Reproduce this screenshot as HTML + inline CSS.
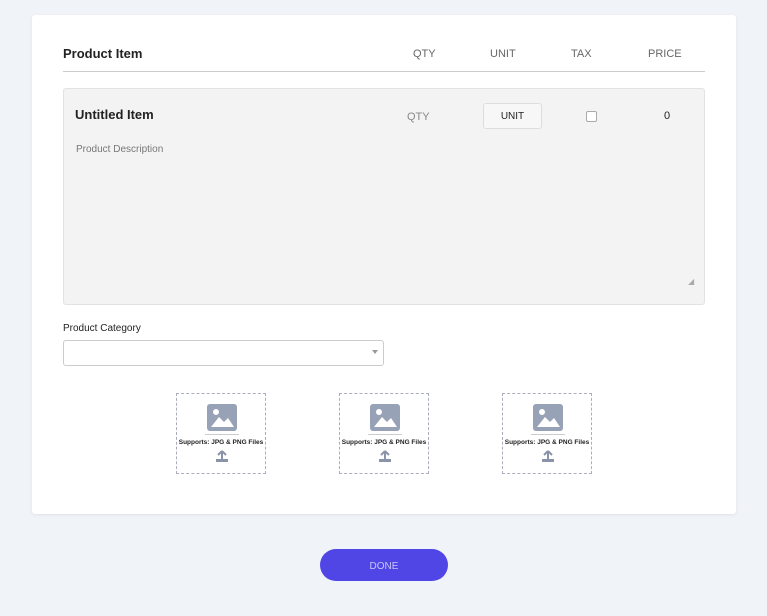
<!DOCTYPE html>
<html><head><style>
*{box-sizing:border-box;margin:0;padding:0}
body{width:767px;height:616px;background:#f0f3f8;font-family:"Liberation Sans",sans-serif;position:relative;overflow:hidden}
.card{position:absolute;left:32px;top:15px;width:704px;height:499px;background:#fff;border-radius:3px;box-shadow:0 1px 3px rgba(0,0,0,.08)}
.a{position:absolute}
.hd{font-size:11px;color:#666}
.up{position:absolute;top:393px;width:90px;height:81px;border:1px dashed #a9adbd}
.up .ic{position:absolute;left:30px;top:10px;width:30px;height:27px;background:#98a2b7;border-radius:3px;overflow:hidden}
.up .t{position:absolute;left:0;right:0;top:45px;text-align:center;font-size:6.5px;font-weight:bold;color:#222}
.up .s{position:absolute;left:28px;top:40px;width:34px;height:1px;background:#ccc}
</style></head><body>
<div class="card">
<div class="a" style="left:31px;top:31px;font-size:13px;font-weight:bold;color:#222">Product Item</div>
<div class="a hd" style="left:381px;top:33px">QTY</div>
<div class="a hd" style="left:458px;top:33px">UNIT</div>
<div class="a hd" style="left:539px;top:33px">TAX</div>
<div class="a hd" style="left:616px;top:33px">PRICE</div>
<div class="a" style="left:31px;top:56px;width:642px;height:1px;background:#ccc"></div>
<div class="a" style="left:31px;top:73px;width:642px;height:217px;background:#f3f3f3;border:1px solid #e2e2e2;border-radius:3px">
 <div class="a" style="left:11px;top:18px;font-size:13px;font-weight:bold;color:#222">Untitled Item</div>
 <div class="a hd" style="left:343px;top:22px;color:#888">QTY</div>
 <div class="a" style="left:419px;top:14px;width:59px;height:26px;border:1px solid #ddd;border-radius:3px;background:#f7f7f7;font-size:10px;text-align:center;line-height:26px;color:#222">UNIT</div>
 <div class="a" style="left:522px;top:22px;width:11px;height:11px;border:1px solid #aaa;border-radius:2px;background:#fff"></div>
 <div class="a" style="left:600px;top:21px;font-size:11px;color:#222">0</div>
 <div class="a" style="left:12px;top:55px;font-size:10px;color:#777">Product Description</div>
 <div class="a" style="left:624px;top:188px;color:#aaa;font-size:8px">◢</div>
</div>
<div class="a" style="left:31px;top:308px;font-size:10px;color:#222">Product Category</div>
<div class="a" style="left:31px;top:325px;width:321px;height:26px;border:1px solid #ccc;border-radius:3px"><div class="a" style="right:5px;top:9px;border:3px solid transparent;border-top:4px solid #999"></div></div>
</div>
<div class="up" style="left:176px"><div class="ic"><svg width="30" height="27"><circle cx="9" cy="8" r="3" fill="#fff"/><path d="M4 23 L12 13 L17 18 L21 14 L27 23 Z" fill="#fff"/></svg></div><div class="s"></div><div class="t">Supports: JPG &amp; PNG Files</div><svg class="a" style="left:38px;top:56px" width="14" height="13"><path d="M7 1 L3 5 M7 1 L11 5 M7 1 V9" stroke="#8a93a8" stroke-width="2" fill="none"/><rect x="1" y="9" width="12" height="3" fill="#8a93a8"/></svg></div>
<div class="up" style="left:339px"><div class="ic"><svg width="30" height="27"><circle cx="9" cy="8" r="3" fill="#fff"/><path d="M4 23 L12 13 L17 18 L21 14 L27 23 Z" fill="#fff"/></svg></div><div class="s"></div><div class="t">Supports: JPG &amp; PNG Files</div><svg class="a" style="left:38px;top:56px" width="14" height="13"><path d="M7 1 L3 5 M7 1 L11 5 M7 1 V9" stroke="#8a93a8" stroke-width="2" fill="none"/><rect x="1" y="9" width="12" height="3" fill="#8a93a8"/></svg></div>
<div class="up" style="left:502px"><div class="ic"><svg width="30" height="27"><circle cx="9" cy="8" r="3" fill="#fff"/><path d="M4 23 L12 13 L17 18 L21 14 L27 23 Z" fill="#fff"/></svg></div><div class="s"></div><div class="t">Supports: JPG &amp; PNG Files</div><svg class="a" style="left:38px;top:56px" width="14" height="13"><path d="M7 1 L3 5 M7 1 L11 5 M7 1 V9" stroke="#8a93a8" stroke-width="2" fill="none"/><rect x="1" y="9" width="12" height="3" fill="#8a93a8"/></svg></div>
<div class="a" style="left:320px;top:549px;width:128px;height:32px;border-radius:16px;background:#4f46e5;color:#c9c6f7;font-size:10px;text-align:center;line-height:35px">DONE</div>
</body></html>
